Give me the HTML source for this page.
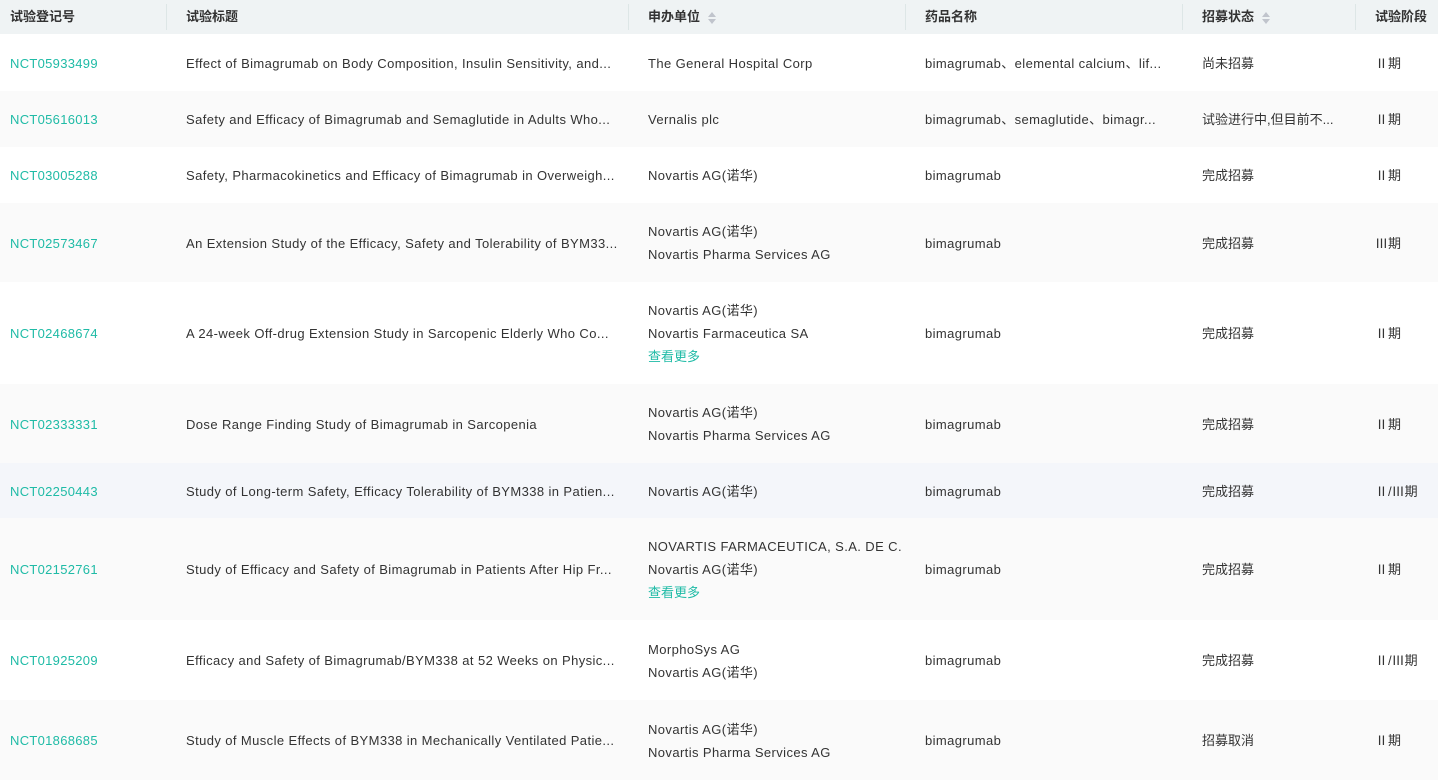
<!DOCTYPE html>
<html><head><meta charset="utf-8"><style>
*{margin:0;padding:0;box-sizing:border-box}
body{width:1438px;height:764px;overflow:hidden;background:#fff;font-family:"Liberation Sans","Noto Sans CJK SC",sans-serif;font-size:13px;color:#333}
.row{position:absolute;left:0;width:1438px;display:flex;align-items:center}
.c{position:absolute;white-space:nowrap;overflow:hidden;line-height:23px;margin-top:1px}
.c2,.c3,.c4{letter-spacing:0.4px}
.c1{left:10px;width:150px;color:#1fbba6;letter-spacing:0.3px}
.c2{left:186px;width:440px}
.c3{left:648px;width:255px}
.c4{left:925px;width:255px}
.c5{left:1202px;width:150px}
.c6{left:1375px;width:63px}
.hd{top:0;height:34px;background:#eff3f4;font-weight:bold;color:#333}
.hd .c{margin-top:-1px;letter-spacing:0}
.div{position:absolute;top:4px;height:26px;width:1px;background:#dde6e6}
.sort{display:inline-block;vertical-align:middle;margin-left:8px;width:8px;height:14px;position:relative}
.sort:before{content:"";position:absolute;left:0;top:1px;border:4px solid transparent;border-top:0;border-bottom:5px solid #c0c4cc}
.sort:after{content:"";position:absolute;left:0;top:8px;border:4px solid transparent;border-bottom:0;border-top:5px solid #c0c4cc}
.more{color:#1fbba6;letter-spacing:0}
</style></head><body>
<div class="row hd">
<div class="c c1" style="color:#333">试验登记号</div><div class="div" style="left:166px"></div>
<div class="c c2">试验标题</div><div class="div" style="left:628px"></div>
<div class="c c3">申办单位<span class="sort"></span></div><div class="div" style="left:905px"></div>
<div class="c c4">药品名称</div><div class="div" style="left:1182px"></div>
<div class="c c5">招募状态<span class="sort"></span></div><div class="div" style="left:1355px"></div>
<div class="c c6">试验阶段</div>
</div>

<div class="row" style="top:34px;height:57px;background:#fff">
<div class="c c1">NCT05933499</div><div class="c c2">Effect of Bimagrumab on Body Composition, Insulin Sensitivity, and...</div><div class="c c3">The General Hospital Corp</div><div class="c c4">bimagrumab、elemental calcium、lif...</div><div class="c c5">尚未招募</div><div class="c c6">Ⅱ期</div></div>

<div class="row" style="top:91px;height:56px;background:#fafafa">
<div class="c c1">NCT05616013</div><div class="c c2">Safety and Efficacy of Bimagrumab and Semaglutide in Adults Who...</div><div class="c c3">Vernalis plc</div><div class="c c4">bimagrumab、semaglutide、bimagr...</div><div class="c c5">试验进行中,但目前不...</div><div class="c c6">Ⅱ期</div></div>

<div class="row" style="top:147px;height:56px;background:#fff">
<div class="c c1">NCT03005288</div><div class="c c2">Safety, Pharmacokinetics and Efficacy of Bimagrumab in Overweigh...</div><div class="c c3">Novartis AG(诺华)</div><div class="c c4">bimagrumab</div><div class="c c5">完成招募</div><div class="c c6">Ⅱ期</div></div>

<div class="row" style="top:203px;height:79px;background:#fafafa">
<div class="c c1">NCT02573467</div><div class="c c2">An Extension Study of the Efficacy, Safety and Tolerability of BYM33...</div><div class="c c3">Novartis AG(诺华)<br>Novartis Pharma Services AG</div><div class="c c4">bimagrumab</div><div class="c c5">完成招募</div><div class="c c6">Ⅲ期</div></div>

<div class="row" style="top:282px;height:102px;background:#fff">
<div class="c c1">NCT02468674</div><div class="c c2">A 24-week Off-drug Extension Study in Sarcopenic Elderly Who Co...</div><div class="c c3">Novartis AG(诺华)<br>Novartis Farmaceutica SA<br><span class="more">查看更多</span></div><div class="c c4">bimagrumab</div><div class="c c5">完成招募</div><div class="c c6">Ⅱ期</div></div>

<div class="row" style="top:384px;height:79px;background:#fafafa">
<div class="c c1">NCT02333331</div><div class="c c2">Dose Range Finding Study of Bimagrumab in Sarcopenia</div><div class="c c3">Novartis AG(诺华)<br>Novartis Pharma Services AG</div><div class="c c4">bimagrumab</div><div class="c c5">完成招募</div><div class="c c6">Ⅱ期</div></div>

<div class="row" style="top:463px;height:55px;background:#f4f6fa">
<div class="c c1">NCT02250443</div><div class="c c2">Study of Long-term Safety, Efficacy Tolerability of BYM338 in Patien...</div><div class="c c3">Novartis AG(诺华)</div><div class="c c4">bimagrumab</div><div class="c c5">完成招募</div><div class="c c6">Ⅱ/Ⅲ期</div></div>

<div class="row" style="top:518px;height:102px;background:#fafafa">
<div class="c c1">NCT02152761</div><div class="c c2">Study of Efficacy and Safety of Bimagrumab in Patients After Hip Fr...</div><div class="c c3">NOVARTIS FARMACEUTICA, S.A. DE C...<br>Novartis AG(诺华)<br><span class="more">查看更多</span></div><div class="c c4">bimagrumab</div><div class="c c5">完成招募</div><div class="c c6">Ⅱ期</div></div>

<div class="row" style="top:620px;height:80px;background:#fff">
<div class="c c1">NCT01925209</div><div class="c c2">Efficacy and Safety of Bimagrumab/BYM338 at 52 Weeks on Physic...</div><div class="c c3">MorphoSys AG<br>Novartis AG(诺华)</div><div class="c c4">bimagrumab</div><div class="c c5">完成招募</div><div class="c c6">Ⅱ/Ⅲ期</div></div>

<div class="row" style="top:700px;height:80px;background:#fafafa">
<div class="c c1">NCT01868685</div><div class="c c2">Study of Muscle Effects of BYM338 in Mechanically Ventilated Patie...</div><div class="c c3">Novartis AG(诺华)<br>Novartis Pharma Services AG</div><div class="c c4">bimagrumab</div><div class="c c5">招募取消</div><div class="c c6">Ⅱ期</div></div>
</body></html>
